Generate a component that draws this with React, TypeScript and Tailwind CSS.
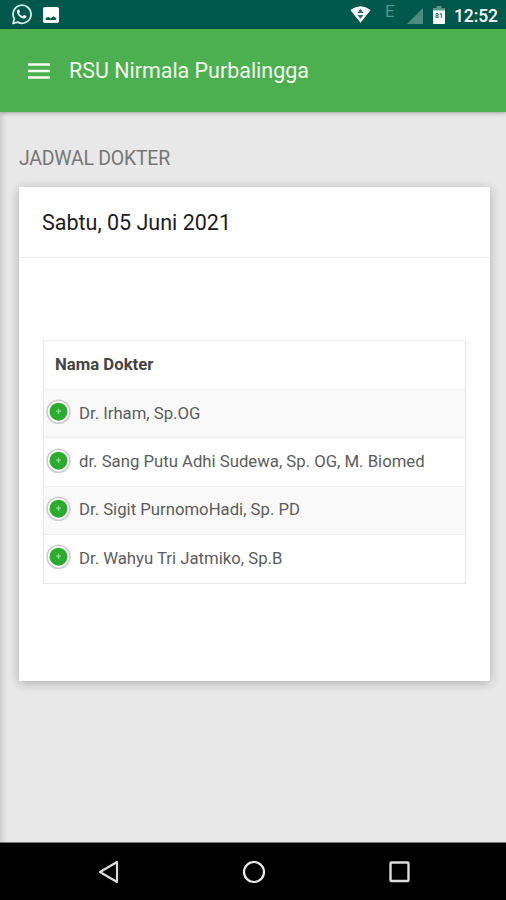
import React from "react"

const doctors = [
  "Dr. Irham, Sp.OG",
  "dr. Sang Putu Adhi Sudewa, Sp. OG, M. Biomed",
  "Dr. Sigit PurnomoHadi, Sp. PD",
  "Dr. Wahyu Tri Jatmiko, Sp.B",
]

const StatusBar: React.FC = () => (
  <div className="flex h-[29px] items-start bg-[#00574b] text-white">
    <svg className="ml-[11px] mt-[4px] h-[21px] w-[21px]" viewBox="0 0 21 21" fill="none">
      <path d="M2.1 19.4 3.3 14.8A9 9 0 1 1 6.7 18.1Z" stroke="#d5eeea" strokeWidth="1.8" strokeLinejoin="round" />
      <path
        d="M7.4 5.6c-.6 0-1.5.8-1.5 2.2 0 3 4 6.8 7.2 6.8 1.3 0 2.4-.9 2.4-2 0-.5-.2-.6-.5-.8l-1.7-.8c-.4-.2-.6 0-.8.2l-.8 1c-1.4-.4-3-2-3.5-3.3l.7-.9c.2-.3.2-.5.1-.7L8.300 6c-.2-.4-.5-.4-.9-.4Z"
        fill="#eaf7f4"
      />
    </svg>
    <svg className="ml-[11px] mt-[7px] h-[16px] w-[16px]" viewBox="0 0 16 16">
      <rect width="16" height="16" rx="1.8" fill="#fff" />
      <path d="M2.4 13 3.5 10.5 5.6 10 7.8 11.5 10.5 9.3 12.5 10.5 13.3 13Z" fill="#00574b" />
    </svg>
    <div className="flex-1" />
    <svg className="mt-[6px] h-[17px] w-[21px]" viewBox="0 0 21 17">
      <path d="M.3 3.9Q10.5-3.3 20.7 3.9L10.5 16.7Z" fill="#fff" />
      <path d="M7.4 7 10.5 2.8 13.6 7ZM7.4 9 10.5 13 13.6 9Z" fill="#3b6d66" />
    </svg>
    <span className="ml-[14px] mt-[2px] w-[10px] text-[17px] leading-[18px] text-[#4f9a8d]">E</span>
    <svg className="ml-[12px] mt-[8px] h-[16px] w-[16px]" viewBox="0 0 16 16">
      <path d="M16 0V16H0Z" fill="#4d8c81" />
    </svg>
    <svg className="ml-[10px] mt-[6px] h-[18px] w-[12px]" viewBox="0 0 12 18">
      <path d="M3.5 0H8.5V2H12V6H0V2H3.5Z" fill="#5b9589" />
      <path d="M0 4.5H12V17Q12 18 11 18H1Q0 18 0 17Z" fill="#fff" />
      <text x="6" y="11.8" textAnchor="middle" fontSize="7" fontWeight="700" fill="#33665e">81</text>
    </svg>
    <span className="ml-[9px] mr-[8px] mt-[5px] w-[44px] whitespace-nowrap text-[17.5px] font-medium leading-[22px] tracking-[-0.1px]">12:52</span>
  </div>
)

const ExpandButton: React.FC = () => (
  <svg className="ml-[1.5px] mt-[-3px] h-[26px] w-[26px] shrink-0" viewBox="0 0 26 26">
    <circle cx="12.5" cy="12.7" r="11.5" fill="#fff" stroke="#cfcbcf" strokeWidth="1.6" />
    <circle cx="12.5" cy="12.7" r="9" fill="#2bab2f" />
    <path d="M10 12.2H15M12.5 9.7V14.7" stroke="#8fdc90" strokeWidth="1.3" />
  </svg>
)

const App: React.FC = () => {
  return (
    <div className="flex h-[900px] w-[506px] flex-col overflow-hidden bg-[#e8e8e8] font-[Roboto,sans-serif]">
      <StatusBar />
      <header className="z-10 flex h-[83px] items-center bg-[#4caf50] pl-[28px] text-[#f3fbee] shadow-[0_1px_4px_rgba(0,0,0,0.3)]">
        <svg className="mt-[1px] h-[18px] w-[22px]" viewBox="0 0 22 18">
          <path d="M0 2.5H22M0 9H22M0 15.5H22" stroke="#f3fbee" strokeWidth="2.7" />
        </svg>
        <h1 className="ml-[19px] whitespace-nowrap text-[21.45px] leading-[28px]">RSU Nirmala Purbalingga</h1>
      </header>

      <main className="flex-1 pl-[19px] pr-[16px] pt-[35px] shadow-[inset_6px_0_5px_-3px_rgba(0,0,0,0.12)]">
        <h2 className="whitespace-nowrap text-[19.5px] leading-[24px] tracking-[-0.25px] text-[#777]">JADWAL DOKTER</h2>
        <section className="mt-[16px] h-[494px] bg-white shadow-[0_2px_10px_rgba(0,0,0,0.25)]">
          <div className="h-[71px] border-b border-[#eeeeee] pl-[23px] pt-[22px] text-[21.5px] leading-[28px] text-[#1c1c1c]">Sabtu, 05 Juni 2021</div>
          <div className="ml-[24px] mt-[82px] w-[423px] border border-[#e6e6e6] border-t-[#f0f0f0] text-[16.73px] text-[#5c5c5c]">
            <div className="flex h-[48px] items-center pl-[11px] font-bold text-[#444]">Nama Dokter</div>
            {doctors.map((name) => (
              <div key={name} className="flex h-[48.4px] items-center border-t border-[#f0f0f0] odd:bg-white even:bg-[#f9f9f9]">
                <ExpandButton />
                <span className="-mt-px ml-[7.5px] whitespace-nowrap">{name}</span>
              </div>
            ))}
          </div>
        </section>
      </main>

      <nav className="flex h-[58px] items-center border-t border-[#777] bg-black">
        <svg className="ml-[98px] h-[24px] w-[22px]" viewBox="0 0 22 24">
          <path d="M19 2V22L2 12Z" fill="none" stroke="#ddd" strokeWidth="2.2" strokeLinejoin="round" />
        </svg>
        <svg className="ml-[122px] h-[24px] w-[24px]" viewBox="0 0 24 24">
          <circle cx="12" cy="12" r="10" fill="none" stroke="#eee" strokeWidth="2.2" />
        </svg>
        <svg className="ml-[122px] h-[24px] w-[24px]" viewBox="0 0 24 24">
          <rect x="2.5" y="2.5" width="18" height="18.5" rx="1" fill="none" stroke="#ddd" strokeWidth="2.4" />
        </svg>
      </nav>
    </div>
  )
}

export default App
